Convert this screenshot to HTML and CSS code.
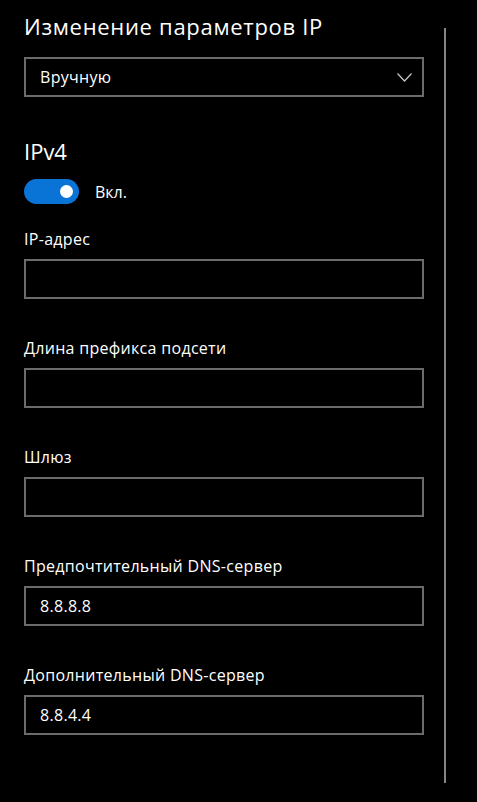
FILE: index.html
```html
<!DOCTYPE html>
<html lang="ru">
<head>
  <meta charset="UTF-8" />
  <meta name="viewport" content="width=device-width, initial-scale=1.0" />
  <title>Изменение параметров IP</title>
  <link rel="stylesheet" href="styles.css">
</head>
<body>

  <div class="page">
    <main class="panel">
      <h1 class="title">Изменение параметров IP</h1>

      <div class="select">
        <span>Вручную</span>
        <svg class="chevron" width="15" height="9" viewBox="0 0 15 9">
          <polyline points="0.5,0.5 7.5,8 14.5,0.5" fill="none" stroke="#c8c8c8" stroke-width="1.2" />
        </svg>
      </div>

      <h2 class="section">IPv4</h2>

      <div class="switch-row">
        <span class="switch"><span class="knob"></span></span>
        <span class="switch-label">Вкл.</span>
      </div>

      <div class="field first">
        <label>IP-адрес</label>
        <div class="input"></div>
      </div>

      <div class="field">
        <label>Длина префикса подсети</label>
        <div class="input"></div>
      </div>

      <div class="field">
        <label>Шлюз</label>
        <div class="input"></div>
      </div>

      <div class="field">
        <label>Предпочтительный DNS-сервер</label>
        <div class="input">8.8.8.8</div>
      </div>

      <div class="field">
        <label>Дополнительный DNS-сервер</label>
        <div class="input">8.8.4.4</div>
      </div>
    </main>

    <div class="scrollbar"></div>
  </div>

</body>
</html>
```

FILE: styles.css
```css
* {
  margin: 0;
  padding: 0;
  box-sizing: border-box;
}
body {
  font-family: 'Open Sans', sans-serif;
  color: #ffffff;
  background: #000000;
  height: 100vh;
  overflow: hidden;
}
.page {
  display: flex;
  gap: 20px;
  padding-left: 24px;
}
.panel {
  width: 400px;
}
.title {
  font-size: 22px;
  font-weight: 400;
  letter-spacing: 0.7px;
  line-height: 28px;
  padding-top: 12px;
}
.select {
  display: flex;
  align-items: center;
  justify-content: space-between;
  height: 40px;
  margin-top: 17px;
  padding: 0 10px 0 14px;
  border: 2px solid #6b6b6b;
  font-size: 16px;
  letter-spacing: 0.3px;
}
.chevron {
  display: block;
}
.section {
  font-size: 22px;
  font-weight: 400;
  line-height: 32px;
  margin-top: 38px;
}
.switch-row {
  display: flex;
  align-items: center;
  gap: 16px;
  margin-top: 12px;
  font-size: 16px;
}
.switch {
  display: flex;
  align-items: center;
  justify-content: flex-end;
  width: 55px;
  height: 25px;
  padding-right: 6px;
  border-radius: 13px;
  background: #0a74d6;
}
.knob {
  width: 13px;
  height: 13px;
  border-radius: 50%;
  background: #ffffff;
}
.field {
  margin-top: 39px;
}
.field.first {
  margin-top: 25px;
}
.field label {
  display: block;
  font-size: 16px;
  letter-spacing: 0.3px;
  line-height: 20px;
}
.input {
  display: flex;
  align-items: center;
  height: 40px;
  margin-top: 10px;
  padding-left: 14px;
  border: 2px solid #6b6b6b;
  font-size: 16px;
  letter-spacing: 0.3px;
}
.scrollbar {
  width: 2px;
  height: 755px;
  margin-top: 28px;
  background: #858585;
}
```
